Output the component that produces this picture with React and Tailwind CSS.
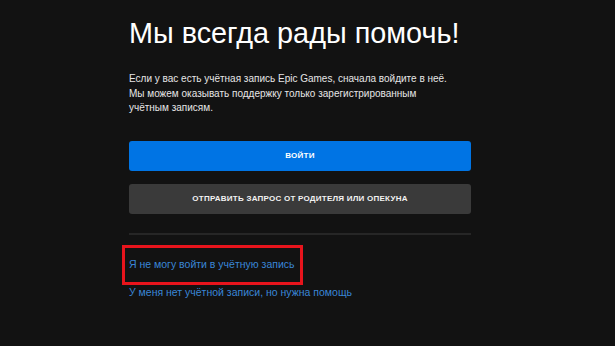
export default function App() {
  return (
    <div className="min-h-[346px] w-[615px] bg-[#121212] font-['Liberation_Sans',Arial,sans-serif]">
      <div className="ml-[129px] w-[342px] pt-[15px]">
        <h1 className="text-[28.8px] leading-[36px] text-white whitespace-nowrap">Мы всегда рады помочь!</h1>

        <p className="mt-[21px] text-[10px] leading-[14.5px] text-[#e6e6e6]">
          Если у вас есть учётная запись Epic Games, сначала войдите в неё.
          <br />
          Мы можем оказывать поддержку только зарегистрированным
          <br />
          учётным записям.
        </p>

        <button className="mt-[25px] flex h-[30px] w-full items-center justify-center rounded-[3px] bg-[#0074e4] text-[8px] font-bold tracking-[0.03em] text-white">
          ВОЙТИ
        </button>
        <button className="mt-[13px] flex h-[30px] w-full items-center justify-center rounded-[3px] bg-[#3a3a3a] text-[8px] font-bold tracking-[0.03em] text-[#f2f2f2]">
          ОТПРАВИТЬ ЗАПРОС ОТ РОДИТЕЛЯ ИЛИ ОПЕКУНА
        </button>

        <div className="mt-[19px] h-[2px] w-full bg-[#262626]" />

        <div className="mt-[10px] -ml-[7px] inline-block border-[3px] border-[#e8141c] pl-[4px] pr-[5px] pt-[9px] pb-[11px]">
          <a className="block text-[10.5px] leading-[14px] text-[#3a86d6]">Я не могу войти в учётную запись</a>
        </div>
        <a className="block text-[10.5px] leading-[14px] text-[#3a86d6]">У меня нет учётной записи, но нужна помощь</a>
      </div>
    </div>
  );
}
